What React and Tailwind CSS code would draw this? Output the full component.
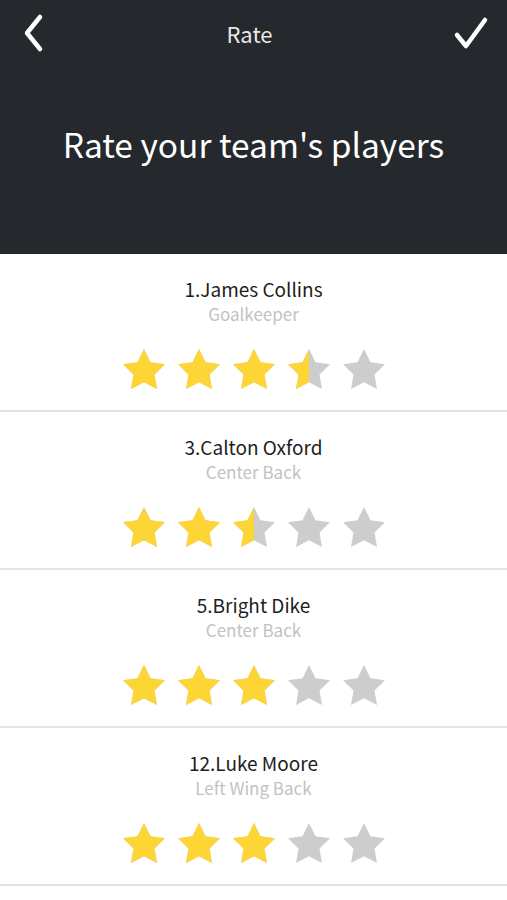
import React from 'react';

const players = [
  { name: '1.James Collins', position: 'Goalkeeper', rating: 3.5 },
  { name: '3.Calton Oxford', position: 'Center Back', rating: 2.5 },
  { name: '5.Bright Dike', position: 'Center Back', rating: 3 },
  { name: '12.Luke Moore', position: 'Left Wing Back', rating: 3 },
];

const STAR = '12,2 15.09,8.26 22,9.27 17,14.14 18.18,21.02 12,17.77 5.82,21.02 7,14.14 2,9.27 8.91,8.26';

function Star({ fill }) {
  return (
    <div className="relative w-[42px] h-[40px]">
      <svg className="absolute inset-0" width="42" height="40" viewBox="2 2 20 19.02">
        <polygon points={STAR} fill="#cdcdcd" />
      </svg>
      <div className="absolute inset-y-0 left-0 overflow-hidden" style={{ width: `${fill * 42}px` }}>
        <svg width="42" height="40" viewBox="2 2 20 19.02">
          <polygon points={STAR} fill="#fdd535" />
        </svg>
      </div>
    </div>
  );
}

function PlayerRow({ player }) {
  return (
    <div className="flex flex-col items-center border-b-2 border-[#e4e4e4] pt-[22px] pb-[21px]">
      <div className="text-[19px] leading-[26px] text-[#1e1e1e]">{player.name}</div>
      <div className="text-[17px] leading-[24px] text-[#c2c2c2]">{player.position}</div>
      <div className="flex gap-[13px] mt-[23px]">
        {[0, 1, 2, 3, 4].map((i) => (
          <Star key={i} fill={Math.max(0, Math.min(1, player.rating - i))} />
        ))}
      </div>
    </div>
  );
}

export default function App() {
  return (
    <div className="w-[507px] min-h-[900px] bg-white font-['Noto_Sans_CJK_KR','Noto_Sans',sans-serif]">
      <div className="bg-[#25282c] h-[254px] flex flex-col">
        <div className="h-[66px] flex items-center justify-between pl-[22px] pr-[18px]">
          <svg width="24" height="40" viewBox="0 0 24 40">
            <polyline points="18,4 5,20 18,36" fill="none" stroke="#ffffff" strokeWidth="4.5" strokeLinecap="round" strokeLinejoin="round" />
          </svg>
          <div className="text-[22px] text-[#e9e9e9]">Rate</div>
          <svg width="36" height="36" viewBox="0 0 36 36">
            <polyline points="4,20 13,31 32,5" fill="none" stroke="#ffffff" strokeWidth="4.5" strokeLinecap="round" strokeLinejoin="round" />
          </svg>
        </div>
        <div className="flex-1 flex items-start justify-center pt-[53px]">
          <div className="text-[33.5px] leading-[50px] text-white">Rate your team's players</div>
        </div>
      </div>
      {players.map((p) => (
        <PlayerRow key={p.name} player={p} />
      ))}
    </div>
  );
}
